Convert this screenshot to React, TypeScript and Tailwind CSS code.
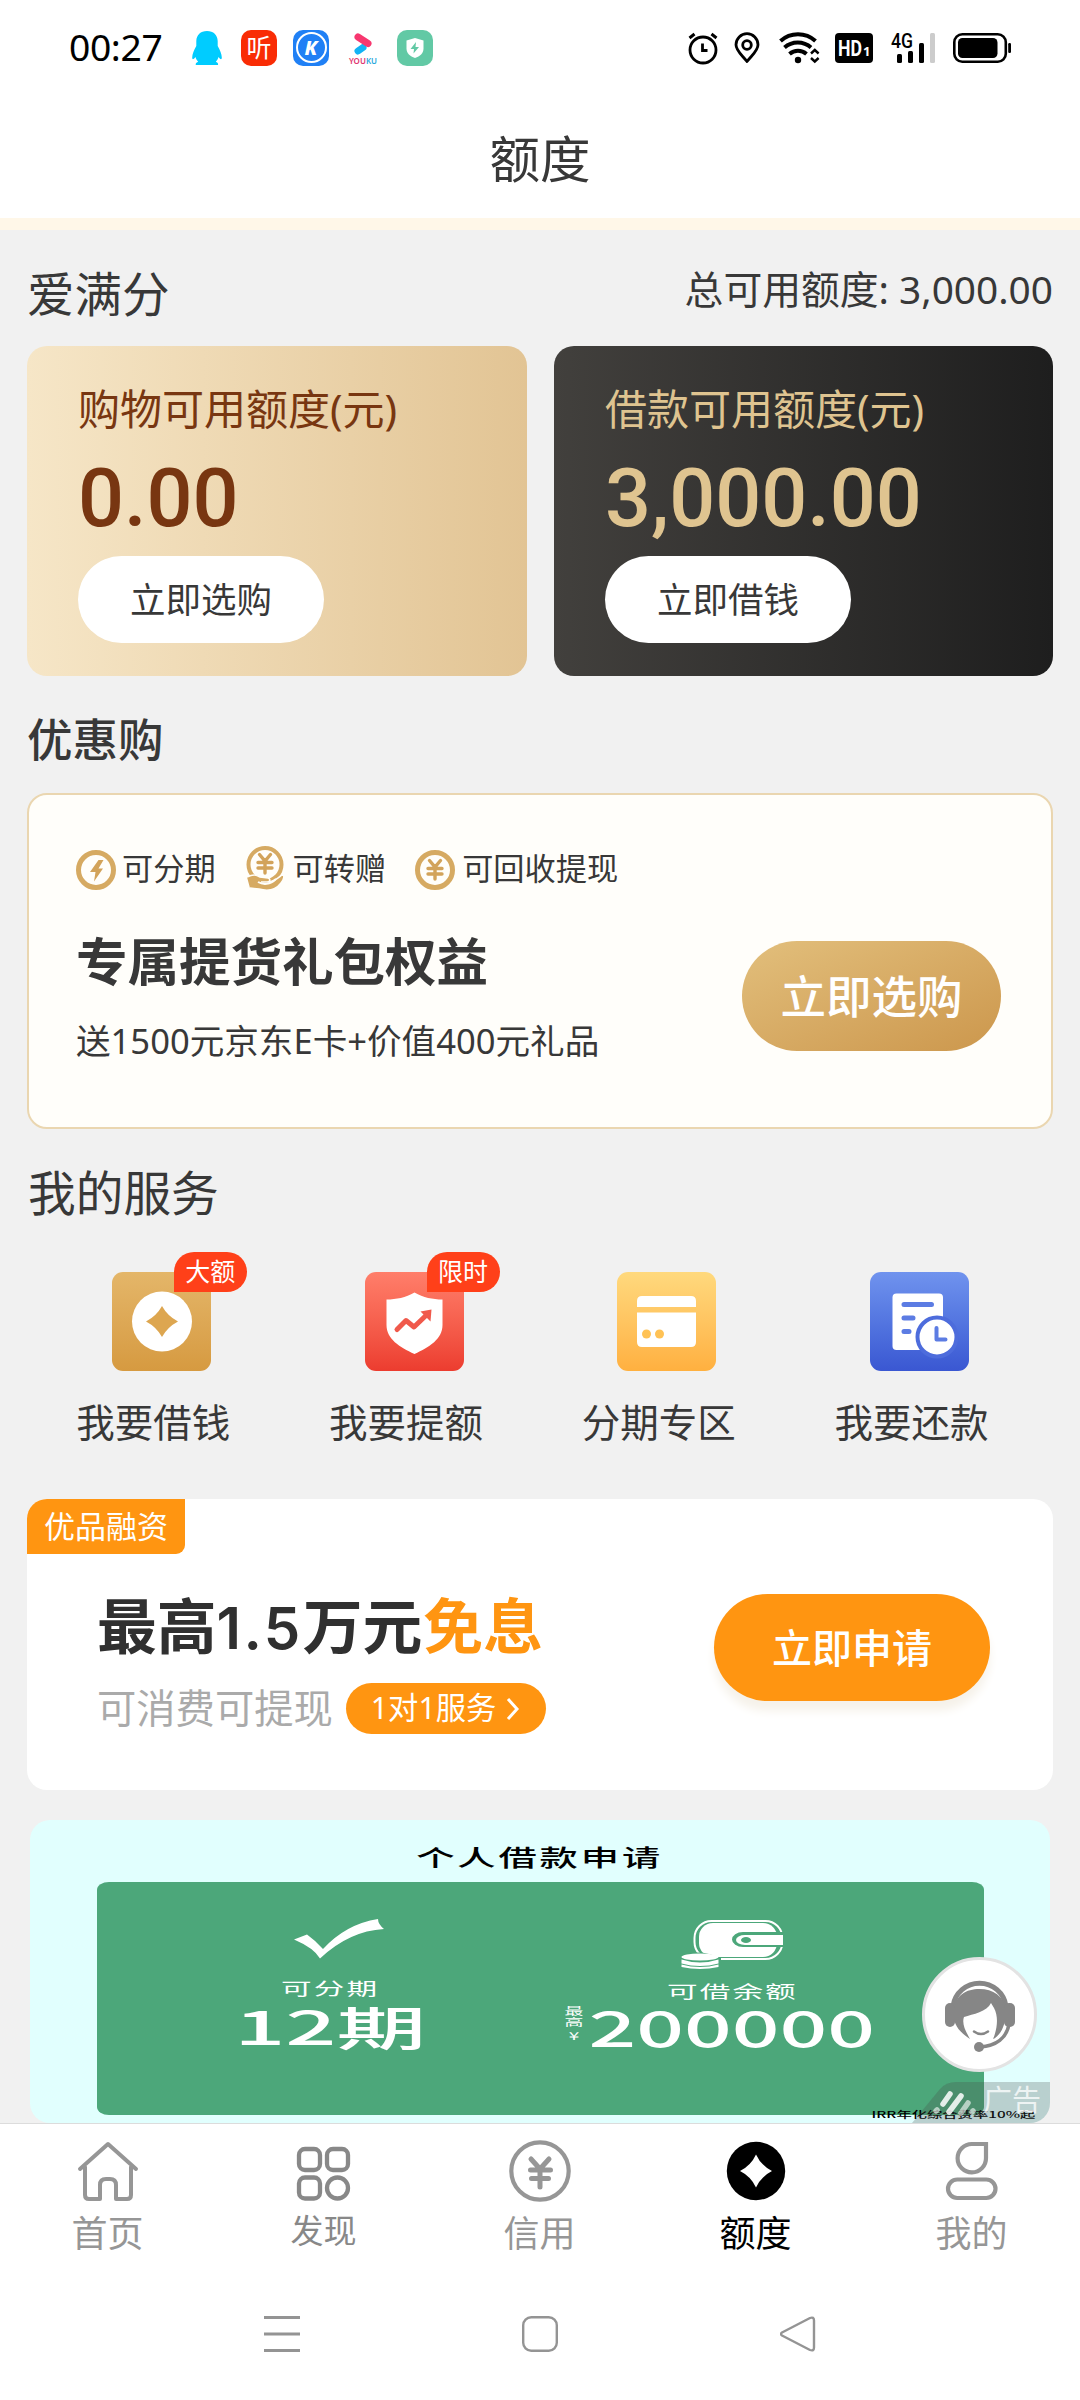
import { ReactNode } from "react";

export default function App() {
  return (
    <div className="w-[1080px] h-[2400px] overflow-hidden bg-white text-[#383838] font-['Noto_Sans','Noto_Sans_CJK_SC',sans-serif] leading-none whitespace-nowrap">
      <header className="h-[218px]">
        <StatusBar />
        <h1 className="flex h-[122px] items-center justify-center pt-1 text-[50.500px]">额度</h1>
      </header>
      <div className="h-3 bg-[#fff7e8]" />
      <main className="relative h-[1893px] overflow-hidden bg-[#f1f1f1] px-[27px]">
        <Limits />
        <GiftPack />
        <Services />
        <FinanceCard />
        <LoanBanner />
        <SupportButton />
      </main>
      <TabBar />
      <SystemNav />
    </div>
  );
}

function StatusBar() {
  return (
    <div className="flex h-24 items-center justify-between pl-[69px] pr-[69px]">
      <div className="flex items-center">
        <span className="mb-[2px] w-[123px] text-[37.300px] text-black tracking-[-0.4px]">00:27</span>
        <svg width="30" height="36" viewBox="0 0 30 36" fill="#0cf">
          <path d="M15 1C8.500 1 4.500 5 4.300 11v5C2 20 .3 24 .2 27.500c0 2 1 2.500 3.300-.5.6 2 1.500 3.500 2.700 4.700C3.800 32.500 3.500 34 3.800 35H26c.4-1.200 0-2.500-2.200-3.300 1.200-1.200 2.100-2.700 2.700-4.700 2.300 3 3.300 2.500 3.300.5-.1-3.500-1.800-7.500-4.100-11.500v-5C25.500 5 21.500 1 15 1z" />
        </svg>
        <span className="ml-[19px] flex size-9 items-center justify-center rounded-[10px] bg-[#f92c05] text-[25px] text-white">听</span>
        <span className="ml-4 flex size-9 items-center justify-center rounded-[10px] bg-[#2080f5]">
          <span className="flex size-[31px] items-center justify-center rounded-full border-2 border-white text-[20px] font-extrabold italic text-white">K</span>
        </span>
        <span className="ml-[19px] flex h-9 w-[30px] flex-col items-center pt-[3px]">
          <svg width="20" height="22" viewBox="0 0 20 22" fill="none" strokeLinecap="round" strokeWidth="7">
            <path d="M5 18l5-3.500" stroke="#12b3f5" />
            <path d="M5 4l10 6.500" stroke="#f7376f" />
          </svg>
          <span className="mt-[2px] text-[8px] font-semibold">
            <span className="text-[#e0336e]">YOU</span>
            <span className="text-[#2aa9dd]">KU</span>
          </span>
        </span>
        <span className="ml-[19px] flex size-9 items-center justify-center rounded-[10px] bg-[#62c9a5]">
          <svg width="20" height="22" viewBox="0 0 20 22">
            <path d="M10 1l8.500 2.500v8c0 5-3.500 7.500-8.500 9.500-5-2-8.500-4.500-8.500-9.500v-8z" fill="#fff" />
            <path d="M11 5l-5.500 7H9l-.5 4.500L14 10h-3.500z" fill="#62c9a5" />
          </svg>
        </span>
      </div>
      <svg width="323" height="48" viewBox="688 24 323 48" fill="none" stroke="#000">
        {/* alarm */}
        <circle cx="703" cy="50" r="13" strokeWidth="2.800" />
        <path d="M689.500 38l5-4M716.500 38l-5-4" strokeWidth="3" />
        <path d="M702.500 43.500v7h5" strokeWidth="2.800" />
        {/* location */}
        <path d="M747 61.500c-4-5.500-11-10.500-11-16.800a11 11 0 0122 0c0 6.300-7 11.300-11 16.800z" strokeWidth="2.800" strokeLinejoin="round" />
        <circle cx="747" cy="45" r="4.300" strokeWidth="2.800" />
        {/* wifi */}
        <path d="M780.500 41a26 26 0 0135 0M784.500 47.500a20 20 0 0126.500 0M789.500 54a13 13 0 0117 0" strokeWidth="4" />
        <circle cx="798" cy="60" r="3.200" fill="#000" stroke="none" />
        <path d="M811 53.500l3.800-3.500 3.800 3.500M811 58l3.800 3.500 3.800-3.500" strokeWidth="2.400" />
        {/* HD badge */}
        <rect x="835" y="33" width="38" height="30" rx="4" fill="#000" stroke="none" />
        <text x="838" y="56" fontSize="22" fontWeight="700" fill="#fff" stroke="none" textLength="24" lengthAdjust="spacingAndGlyphs" className="font-['Roboto']">HD</text>
        <text x="863" y="56" fontSize="13" fontWeight="700" fill="#fff" stroke="none" className="font-['Noto_Sans']">1</text>
        {/* signal */}
        <text x="891" y="48" fontSize="20" fontWeight="500" fill="#000" stroke="none" textLength="22" lengthAdjust="spacingAndGlyphs" className="font-['Roboto']">4G</text>
        <g stroke="none" fill="#000">
          <rect x="897" y="54" width="5" height="9" rx="1.500" />
          <rect x="908" y="51" width="5" height="12" rx="1.500" />
          <rect x="919" y="43" width="5" height="20" rx="1.500" />
          <rect x="930" y="33" width="5" height="30" rx="1.500" fill="#ccc" />
        </g>
        {/* battery */}
        <rect x="954.300" y="34.300" width="51.500" height="27.400" rx="8" strokeWidth="2.600" />
        <rect x="958" y="38" width="39.500" height="20" rx="4.500" fill="#000" stroke="none" />
        <rect x="1008.200" y="43" width="2.800" height="10" rx="1.200" fill="#000" stroke="none" />
      </svg>
    </div>
  );
}

function Limits() {
  return (
    <section>
      <div className="flex h-[116px] items-center justify-between pt-3">
        <h2 className="text-[47.5px]">爱满分</h2>
        <span className="mb-[10px] text-[38.800px]">总可用额度: 3,000.00</span>
      </div>
      <div className="flex h-[330px] gap-[27px]">
        <div className="w-[500px] rounded-[20px] bg-[linear-gradient(90deg,#f6e6c7,#e2c494)] pt-[42px] pl-[51px] text-[#783611]">
          <LimitBody label="购物可用额度(元)" amount="0.00" action="立即选购" />
        </div>
        <div className="w-[499px] rounded-[20px] bg-[linear-gradient(90deg,#42403d,#1e1e1e)] pt-[42px] pl-[51px] text-[#dfc490]">
          <LimitBody label="借款可用额度(元)" amount="3,000.00" action="立即借钱" />
        </div>
      </div>
    </section>
  );
}

function LimitBody({ label, amount, action }: { label: string; amount: string; action: string }) {
  return (
    <>
      <div className="text-[42px]">{label}</div>
      <div className="mt-[28px] h-[98px] font-['Roboto'] text-[81px] font-medium">{amount}</div>
      <button className="flex h-[87px] w-[246px] items-center justify-center rounded-full bg-white text-[35.500px] text-[#383838]">{action}</button>
    </>
  );
}

function GoldYen({ cy }: { cy: number }) {
  return (
    <g transform={`translate(20 ${cy})`} stroke="#d2a35a" strokeLinecap="round" fill="none">
      <path d="M-5.500-9.500L0-3l5.500-6.500M0-3v12M-7-1.500H7M-7 4H7" strokeWidth="3.400" />
    </g>
  );
}

function GiftPack() {
  return (
    <section>
      <h2 className="flex h-[117px] items-center pt-[11px] text-[45.500px] font-medium">优惠购</h2>
      <div className="flex h-[336px] items-start justify-between rounded-[20px] border-2 border-[#ead6b0] bg-[#fffefa] pr-[50px] pl-[47px]">
        <div>
          <div className="flex items-center pt-[50px] text-[31.200px]">
            <svg width="40" height="48" viewBox="0 0 40 48" fill="none">
              <circle cx="20" cy="25" r="17.500" stroke="#d6aa62" strokeWidth="5" />
              <path d="M22.500 15h5l-5 8.500h4.500l-9 13 1.500-9.500h-5.500z" fill="#d2a35a" />
            </svg>
            <span className="ml-[6px]">可分期</span>
            <svg width="40" height="48" viewBox="0 0 40 48" fill="none" className="ml-[29px]">
              <circle cx="20" cy="19.500" r="16.500" stroke="#d6aa62" strokeWidth="4" />
              <GoldYen cy={19} />
              <path d="M2 32c7-3 9-2 13 0l8 1c3 1 2 4-1 4h-6 8c6-1 9-4 13-7 3 0 2 4-1 8-6 8-15 8-22 6l-9-1" fill="#d6aa62" stroke="#fffefa" strokeWidth="1.500" />
              <path d="M13 37c5 3 12 3 18-3" stroke="#fffefa" strokeWidth="2" />
            </svg>
            <span className="ml-[8px]">可转赠</span>
            <svg width="40" height="48" viewBox="0 0 40 48" fill="none" className="ml-[29px]">
              <circle cx="20" cy="25" r="17.500" stroke="#d6aa62" strokeWidth="5" />
              <GoldYen cy={25} />
            </svg>
            <span className="ml-[7px]">可回收提现</span>
          </div>
          <h3 className="mt-[43px] text-[51.500px] font-semibold">专属提货礼包权益</h3>
          <p className="mt-[36px] text-[34.600px]">送1500元京东E卡+价值400元礼品</p>
        </div>
        <button className="mt-[146px] flex h-[110px] w-[259px] items-center justify-center rounded-full bg-linear-to-br from-[#e2bf7c] to-[#cc974c] pt-[2px] text-[45.500px] font-medium text-white">
          立即选购
        </button>
      </div>
    </section>
  );
}

type ServiceProps = { label: string; tile: string; badge?: string; children: ReactNode };

function Service({ label, tile, badge, children }: ServiceProps) {
  return (
    <div className="flex w-[252.700px] flex-col items-center">
      <div className="relative left-[8px]">
        <div className={`size-[99px] rounded-[11px] bg-linear-to-b ${tile}`}>
          <svg width="99" height="99" viewBox="0 0 99 99" fill="none">
            {children}
          </svg>
        </div>
        {badge && (
          <span className="absolute -top-5 left-[62px] flex h-10 w-[73px] items-center justify-center rounded-full rounded-bl-none bg-[#ff4019] pb-px text-[25px] text-white">
            {badge}
          </span>
        )}
      </div>
      <span className="mt-[32px] text-[38.500px]">{label}</span>
    </div>
  );
}

function Services() {
  return (
    <section>
      <h2 className="flex h-32 items-center pl-px text-[47.700px]">我的服务</h2>
      <div className="flex h-[242px] pt-[15px]">
        <Service label="我要借钱" tile="from-[#e4b669] to-[#d69a40]" badge="大额">
          <circle cx="50" cy="49.500" r="30" fill="#fff" />
          <path d="M50 34q5.500 10 16 15.500-10.500 5.500-16 15.500-5.500-10-16-15.500 10.500-5.500 16-15.500z" fill="#dda650" />
        </Service>
        <Service label="我要提额" tile="from-[#ff7e6a] to-[#ec3c2f]" badge="限时">
          <path d="M49.500 20.500c9 5 18 7 28 7V53c0 14-13 22-28 29-15-7-28-15-28-29V27.500c10 0 19-2 28-7z" fill="#fff" />
          <path d="M32 57.500l9-9 8 6.500 12.500-12" stroke="#f0594b" strokeWidth="5" strokeLinecap="round" strokeLinejoin="round" />
          <path d="M55.500 39.500l11-2-1 12z" fill="#f0594b" />
        </Service>
        <Service label="分期专区" tile="from-[#ffd97d] to-[#ffb03f]">
          <path d="M20 35v-6q0-5 5-5h49q5 0 5 5v6zM20 40.500h59V70q0 5-5 5H25q-5 0-5-5z" fill="#fff" />
          <circle cx="29.500" cy="62" r="4.500" fill="#ffc255" />
          <circle cx="42.500" cy="62" r="4.500" fill="#ffc255" />
        </Service>
        <Service label="我要还款" tile="from-[#7093ee] to-[#3a57d2]">
          <rect x="22.500" y="21.500" width="50.500" height="56.500" rx="4" fill="#fff" />
          <path d="M34 32.500h27.500M34 46h9M34 59.500h5" stroke="#5c7ce3" strokeWidth="5" strokeLinecap="round" />
          <circle cx="67" cy="65" r="19.500" fill="#fff" stroke="#4d6cdc" strokeWidth="4" />
          <path d="M66.500 56v11.500h9" stroke="#5c7ce3" strokeWidth="4" strokeLinecap="round" strokeLinejoin="round" />
        </Service>
      </div>
    </section>
  );
}

function FinanceCard() {
  return (
    <section className="flex h-[291px] justify-between overflow-hidden rounded-[20px] bg-white">
      <div>
        <div className="flex h-[55px] w-[158px] items-center justify-center rounded-br-[9px] bg-[#ff9511] text-[31px] text-white">优品融资</div>
        <div className="pl-[70px]">
          <h3 className="mt-[40px] h-[60px] font-['Noto_Sans_CJK_SC',sans-serif] text-[59.800px] font-bold text-[#303030]">
            最高<span className="font-['Inter'] text-[58px] font-semibold tracking-[2.400px]">1.5</span>万元<span className="ml-px text-[#ff9511]">免息</span>
          </h3>
          <div className="mt-[29px] flex h-[51px] items-center">
            <span className="text-[39.300px] text-[#aaa]">可消费可提现</span>
            <span className="ml-[13px] flex h-[51px] w-[200px] items-center rounded-full bg-[#ff9511] pl-[25px] text-[30.300px] text-white">
              1对1服务
              <svg width="14" height="24" viewBox="0 0 14 24" fill="none" className="ml-[10px]">
                <path d="M2 2l9 10-9 10" stroke="#fff" strokeWidth="3" />
              </svg>
            </span>
          </div>
        </div>
      </div>
      <button className="mt-[95px] mr-[63px] flex h-[107px] w-[276px] items-center justify-center rounded-full bg-[#ff9511] text-[40px] font-medium text-white shadow-[0_10px_10px_#f6f2ea]">
        立即申请
      </button>
    </section>
  );
}

function LoanBanner() {
  return (
    <section className="relative mx-[3px] mt-[30px] h-[303px] overflow-hidden rounded-[20px] bg-[#e1fffe] px-[67px] font-['Noto_Sans_CJK_SC',sans-serif]">
      <div className="flex h-[62px] items-center justify-center pt-[10px]">
        <h3 className="scale-x-[1.700] text-[22.500px] font-medium tracking-[1.700px] text-black">个人借款申请</h3>
      </div>
      <div className="flex h-[233px] w-[887px] rounded-[12px/8px] bg-[#4ca77a] text-white">
        <div className="flex w-[466px] flex-col items-center">
          <svg width="90" height="40" viewBox="0 0 90 40" fill="#fff" className="relative left-[9px] mt-[37px]">
            <path d="M0 20.500L13 15.500Q22 22 29 30Q52 5 84 0Q84 5 90 10Q55 12 26 39.500Q20 29 0 20.500z" />
          </svg>
          <span className="mt-[20px] scale-x-[1.750] text-[17.500px] tracking-[1.200px]">可分期</span>
          <span className="mt-[5px] scale-x-[1.950] text-[46px] font-medium">12期</span>
        </div>
        <div className="flex w-[338px] flex-col items-center">
          <svg width="102" height="50" viewBox="0 0 102 50" className="mt-[38px]">
            <rect x="13.500" y="1" width="88" height="38" rx="17" fill="none" stroke="#fff" strokeWidth="2" />
            <rect x="18" y="3" width="78" height="34" rx="14" fill="#fff" />
            <path d="M104 12H62a11 7.500 0 000 15h42z" fill="#4ca77a" />
            <path d="M104 15H64a9 5 0 000 10h40z" fill="#fff" />
            <ellipse cx="65" cy="20" rx="5" ry="3" fill="#4ca77a" />
            <path d="M-2 36q20-8 42 2v14H-2z" fill="#4ca77a" />
            <ellipse cx="19" cy="37" rx="18.500" ry="3.500" fill="#fff" />
            <path d="M.5 39.500q18.500 6 37 0v4q-18.500 5-37 0zM.5 44.500q18.500 5 37 0V47q-18.500 4-37 0z" fill="#fff" />
          </svg>
          <span className="mt-[12px] scale-x-[1.750] text-[17.500px] tracking-[1.200px]">可借余额</span>
          <div className="relative mt-px">
            <span className="block scale-x-[1.710] text-[49px] font-medium">200000</span>
            <span className="absolute top-[5px] -left-[79px] flex w-[10px] scale-x-[1.800] flex-col items-center gap-px text-[10.500px]">
              <span>最</span>
              <span>高</span>
              <span className="mt-[2px]">¥</span>
            </span>
          </div>
        </div>
      </div>
      <span className="absolute right-[15px] bottom-[4px] origin-right scale-x-[1.700] text-[9px] font-medium text-black">IRR年化综合费率10%起</span>
      <div className="absolute right-0 bottom-0">
        <svg width="138" height="41" viewBox="0 0 138 41" fill="none" className="block">
          <path d="M0 41L28 7Q34 0 44 0h94v41z" fill="#444" fillOpacity=".25" />
          <g stroke="#fff" strokeWidth="5.500" strokeLinecap="round">
            <path d="M38 12l-7 10M49 14L37 30" strokeOpacity=".85" />
            <path d="M25 28l-1 1M56 21l-7 10M61 29l-1 1" strokeOpacity=".6" />
          </g>
        </svg>
        <span className="absolute top-[2px] right-[9px] text-[29px] text-white/75">广告</span>
      </div>
    </section>
  );
}

function SupportButton() {
  return (
    <button className="absolute top-[1727px] left-[922px] size-[115px] rounded-full border-[3px] border-[#e3e3e3] bg-white">
      <svg width="109" height="109" viewBox="0 0 109 109" fill="none">
        <path d="M28 46a26.800 26.800 0 0153 0" stroke="#868686" strokeWidth="5" />
        <path d="M28 50C31 35 41 29 54.500 29S79 36 81 50c0 16-6 26-13 29 4-9 6-22 1-31l-3-5c-4 9-18 11-27 14-3 8 4 18 6 22-12-8-17-15-17-29z" fill="#868686" />
        <rect x="20" y="43" width="10" height="24" rx="5" fill="#868686" />
        <rect x="79" y="43" width="11" height="24" rx="5" fill="#868686" />
        <path d="M49 71.500q7 5 14 0" stroke="#868686" strokeWidth="2.500" strokeLinecap="round" />
        <path d="M84 64c-2 14-13 22-29 23" stroke="#868686" strokeWidth="3.500" />
        <circle cx="54" cy="87" r="5" fill="#868686" />
      </svg>
    </button>
  );
}

function Tab({ label, active, small, children }: { label: string; active?: boolean; small?: boolean; children: ReactNode }) {
  return (
    <a className={`flex w-[216px] flex-col items-center ${active ? "text-black" : small ? "text-[#888]" : "text-[#969696]"}`}>
      <svg width="64" height="64" viewBox="0 0 64 64" fill="none" stroke="currentColor" className="mt-[15px]">
        {children}
      </svg>
      <span className={small ? "mt-[11px] pr-px text-[33px]" : "mt-[13px] pr-px text-[36px]"}>{label}</span>
    </a>
  );
}

function TabBar() {
  return (
    <nav className="flex h-[160px] border-t border-[#dcdcdc]">
      <Tab label="首页">
        <path d="M4 30L32 5l28 25M9 28v28q0 4 4 4h11V46q0-6 6-6h4q6 0 6 6v14h11q4 0 4-4V28" strokeWidth="4" strokeLinejoin="round" strokeLinecap="round" />
      </Tab>
      <Tab label="发现" small>
        <rect x="7" y="10" width="21" height="21" rx="6" strokeWidth="4.300" />
        <rect x="35" y="10" width="21" height="21" rx="6" strokeWidth="4.300" />
        <rect x="7" y="38.500" width="21" height="21" rx="6" strokeWidth="4.300" />
        <circle cx="45.500" cy="49" r="10.500" strokeWidth="4.300" />
      </Tab>
      <Tab label="信用">
        <circle cx="32" cy="32" r="28.700" strokeWidth="4.200" />
        <path d="M23 20l9 10 9-10M32 30v18M22.500 31h20M23.500 39.500h17" strokeWidth="5" strokeLinecap="round" />
      </Tab>
      <Tab label="额度" active>
        <circle cx="32" cy="32" r="29.200" fill="currentColor" stroke="none" />
        <path d="M32 15.500q5 11 16 16.500-11 5.500-16 16.500-5-11-16-16.500 11-5.500 16-16.500z" fill="#fff" stroke="none" />
      </Tab>
      <Tab label="我的">
        <path d="M46 5v14A14.200 14.200 0 1131.800 5z" strokeWidth="4.200" />
        <rect x="8" y="40.500" width="47.500" height="18.500" rx="9.250" strokeWidth="4.200" />
      </Tab>
    </nav>
  );
}

function SystemNav() {
  return (
    <div className="flex h-[102px] items-center justify-center gap-[222px]">
      <svg width="36" height="36" viewBox="0 0 36 36" stroke="#949494" strokeWidth="3">
        <path d="M0 1.500h36M0 18h36M0 34.500h36" />
      </svg>
      <svg width="36" height="36" viewBox="0 0 36 36" fill="none" stroke="#949494" strokeWidth="2.400">
        <rect x="1.200" y="1.200" width="33.600" height="33.600" rx="8" />
      </svg>
      <svg width="36" height="36" viewBox="0 0 36 36" fill="none" stroke="#949494" strokeWidth="2.400" strokeLinejoin="round">
        <path d="M30 2q4-1.500 4 2.500v27q0 4-4 2.500L2 19.500q-2-1.500 0-3z" />
      </svg>
    </div>
  );
}
